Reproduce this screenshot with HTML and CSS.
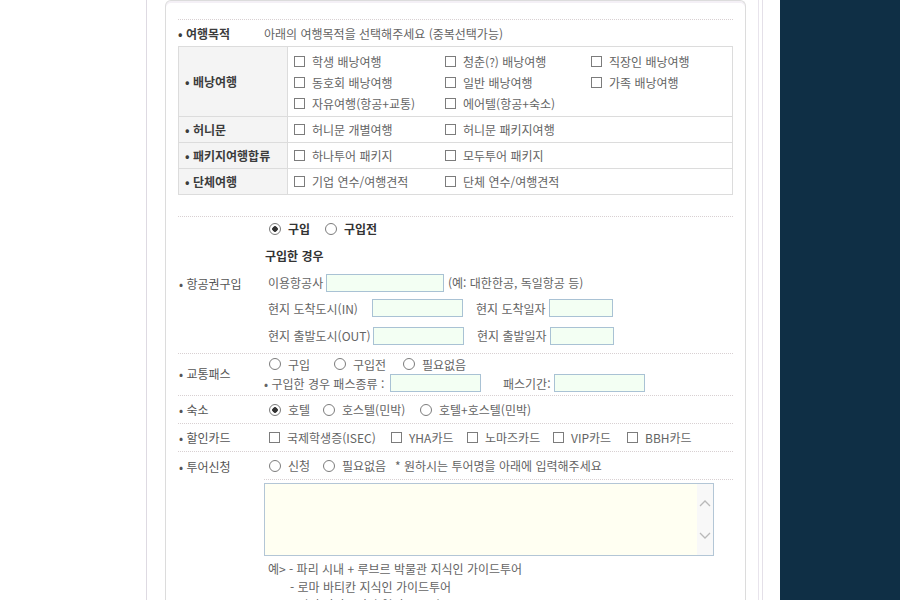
FILE: index.html
```html
<!DOCTYPE html>
<html lang="ko">
<head>
    <meta charset="UTF-8">
    <title>여행상담 신청</title>
    <link rel="stylesheet" href="styles.css">
</head>
<body>
<div class="page">
    <div class="gap-left"></div>

    <div class="main">
        <div class="panel">

            <div class="purpose-head">
                <div class="head-label">• 여행목적</div>
                <div>아래의 여행목적을 선택해주세요 (중복선택가능)</div>
            </div>

            <table class="purpose">
                <tr class="tall">
                    <th>• 배낭여행</th>
                    <td>
                        <div class="chk-grid">
                            <label><input type="checkbox">학생 배낭여행</label>
                            <label><input type="checkbox">청춘(?) 배낭여행</label>
                            <label><input type="checkbox">직장인 배낭여행</label>
                            <label><input type="checkbox">동호회 배낭여행</label>
                            <label><input type="checkbox">일반 배낭여행</label>
                            <label><input type="checkbox">가족 배낭여행</label>
                            <label><input type="checkbox">자유여행(항공+교통)</label>
                            <label><input type="checkbox">에어텔(항공+숙소)</label>
                        </div>
                    </td>
                </tr>
                <tr>
                    <th>• 허니문</th>
                    <td>
                        <div class="chk-grid">
                            <label><input type="checkbox">허니문 개별여행</label>
                            <label><input type="checkbox">허니문 패키지여행</label>
                        </div>
                    </td>
                </tr>
                <tr>
                    <th>• 패키지여행합류</th>
                    <td>
                        <div class="chk-grid">
                            <label><input type="checkbox">하나투어 패키지</label>
                            <label><input type="checkbox">모두투어 패키지</label>
                        </div>
                    </td>
                </tr>
                <tr>
                    <th>• 단체여행</th>
                    <td>
                        <div class="chk-grid">
                            <label><input type="checkbox">기업 연수/여행견적</label>
                            <label><input type="checkbox">단체 연수/여행견적</label>
                        </div>
                    </td>
                </tr>
            </table>

            <div class="form-row air">
                <div class="row-label">• 항공권구입</div>
                <div class="row-body">
                    <div class="line l1 opts buy">
                        <label class="strong"><input type="radio" name="air" checked>구입</label>
                        <label class="strong"><input type="radio" name="air">구입전</label>
                    </div>
                    <div class="line l2 strong case">구입한 경우</div>
                    <div class="line l3">
                        <span class="fld w58">이용항공사</span><input type="text" class="txt w118"><span class="hint">(예: 대한한공, 독일항공 등)</span>
                    </div>
                    <div class="line l4">
                        <span class="fld w104">현지 도착도시(IN)</span><input type="text" class="txt w91">
                        <span class="fld w73 sp">현지 도착일자</span><input type="text" class="txt w64">
                    </div>
                    <div class="line l5">
                        <span class="fld w105">현지 출발도시(OUT)</span><input type="text" class="txt w91">
                        <span class="fld w73 sp">현지 출발일자</span><input type="text" class="txt w64">
                    </div>
                </div>
            </div>

            <div class="form-row pass">
                <div class="row-label">• 교통패스</div>
                <div class="row-body">
                    <div class="line p1 opts pass-opts">
                        <label><input type="radio" name="pass">구입</label>
                        <label><input type="radio" name="pass">구입전</label>
                        <label><input type="radio" name="pass">필요없음</label>
                    </div>
                    <div class="line p2">
                        <span class="fld w126">• 구입한 경우 패스종류 :</span><input type="text" class="txt w91">
                        <span class="fld w51 sp22">패스기간:</span><input type="text" class="txt w91">
                    </div>
                </div>
            </div>

            <div class="form-row single">
                <div class="row-label">• 숙소</div>
                <div class="row-body opts stay">
                    <label><input type="radio" name="stay" checked>호텔</label>
                    <label><input type="radio" name="stay">호스텔(민박)</label>
                    <label><input type="radio" name="stay">호텔+호스텔(민박)</label>
                </div>
            </div>

            <div class="form-row single">
                <div class="row-label">• 할인카드</div>
                <div class="row-body opts cards">
                    <label><input type="checkbox">국제학생증(ISEC)</label>
                    <label><input type="checkbox">YHA카드</label>
                    <label><input type="checkbox">노마즈카드</label>
                    <label><input type="checkbox">VIP카드</label>
                    <label><input type="checkbox">BBH카드</label>
                </div>
            </div>

            <div class="form-row tour">
                <div class="row-label top">• 투어신청</div>
                <div class="row-body">
                    <div class="line t1 opts tour-opts">
                        <label><input type="radio" name="tour">신청</label>
                        <label><input type="radio" name="tour">필요없음</label>
                        <span>* 원하시는 투어명을 아래에 입력해주세요</span>
                    </div>
                    <div class="tour-box">
                        <textarea></textarea>
                        <div class="scrollbar">
                            <svg width="12" height="8" viewBox="0 0 12 8"><path d="M1 7 L6 2 L11 7" fill="none" stroke="#b9b9b9" stroke-width="1.3"/></svg>
                            <svg width="12" height="8" viewBox="0 0 12 8"><path d="M1 1 L6 6 L11 1" fill="none" stroke="#b9b9b9" stroke-width="1.3"/></svg>
                        </div>
                    </div>
                    <div class="examples">
                        <div>예&gt; - 파리 시내 + 루브르 박물관 지식인 가이드투어</div>
                        <div class="indent">- 로마 바티칸 지식인 가이드투어</div>
                        <div class="indent">- 터키 카파도키아 열기구 투어</div>
                    </div>
                </div>
            </div>

        </div>
    </div>

    <div class="gap-right"></div>
    <div class="side"></div>
</div>
</body>
</html>
```

FILE: styles.css
```css
body {
    margin: 0;
    background: #ffffff;
    font-family: "Noto Sans CJK KR", "Noto Sans", sans-serif;
    font-size: 12px;
    color: #646464;
}

.page {
    display: flex;
    width: 900px;
    height: 600px;
    overflow: hidden;
}

.gap-left {
    width: 146px;
    flex: none;
}

.main {
    width: 597px;
    flex: none;
    padding-left: 18px;
    border-left: 1px solid #dedae2;
    border-right: 1px solid #e4e0e8;
    box-shadow: inset -3px 0 0 #ffffff, inset -4px 0 0 #e8e4ec;
}

.gap-right {
    width: 17px;
    flex: none;
}

.side {
    flex: 1;
    background: #0f2f45;
}

.panel {
    width: 555px;
    height: 640px;
    padding: 18px 12px 0 12px;
    border: 1px solid #dcdcdc;
    border-bottom: none;
    border-radius: 6px 6px 0 0;
    box-shadow: inset 0 2px 0 #f4f0f6;
}

.purpose-head {
    display: flex;
    align-items: center;
    height: 26px;
    border-top: 1px dotted #d8d0d2;
}

.head-label {
    width: 86px;
    font-weight: bold;
    color: #3c3c3c;
}

/* purpose table */
.purpose {
    width: 100%;
    border-collapse: collapse;
}

.purpose th,
.purpose td {
    border: 1px solid #dcdcdc;
    height: 25px;
    padding: 0;
}

.purpose tr.tall td,
.purpose tr.tall th {
    height: 69px;
}

.purpose th {
    width: 102px;
    padding-left: 6px;
    text-align: left;
    background: #f4f4f4;
    font-weight: bold;
    color: #3c3c3c;
}

.chk-grid {
    display: grid;
    grid-template-columns: 151px 146px auto;
    grid-auto-rows: 21px;
    align-items: center;
    padding-left: 6px;
}

.purpose tr.tall .chk-grid {
    padding-top: 1px;
}

label {
    display: inline-flex;
    align-items: center;
    white-space: nowrap;
}

input[type="checkbox"],
input[type="radio"] {
    appearance: none;
    -webkit-appearance: none;
    width: 11px;
    height: 11px;
    margin: 0 7px 0 0;
    border: 1px solid #7c7c7c;
    background: #ffffff;
    box-sizing: border-box;
    flex: none;
}

input[type="radio"] {
    width: 12px;
    height: 12px;
    border-radius: 50%;
}

input[type="radio"]:checked {
    background: radial-gradient(circle, #333333 0, #333333 2.5px, #ffffff 3px);
}

/* lower form rows */
.form-row {
    display: grid;
    grid-template-columns: 86px 1fr;
    align-items: center;
    border-bottom: 1px dotted #d8d0d2;
}

.form-row.air {
    margin-top: 21px;
    border-top: 1px dotted #d8d0d2;
    padding-bottom: 4px;
}

.row-label {
    padding-left: 1px;
    color: #555555;
}

.row-label.top {
    align-self: start;
    height: 28px;
    display: flex;
    align-items: center;
}

.line {
    display: flex;
    align-items: center;
    white-space: nowrap;
}

.l1 { height: 23px; }
.l2 { height: 31px; padding-left: 1px; }
.l3 { height: 23px; padding-left: 4px; }
.l4 { height: 28px; padding-left: 4px; }
.l5 { height: 27px; padding-left: 4px; }

.strong {
    font-weight: bold;
    color: #333333;
}

.opts {
    padding-left: 5px;
}

.buy label:first-child { width: 56px; }

.fld {
    display: inline-block;
    flex: none;
}

.sp { margin-left: 13px; }
.sp22 { margin-left: 22px; }

.w51 { width: 51px; }
.w58 { width: 58px; }
.w73 { width: 73px; }
.w104 { width: 104px; }
.w105 { width: 105px; }
.w126 { width: 126px; }

.txt {
    height: 18px;
    margin: 0;
    padding: 0 3px;
    border: 1px solid #a9c2d4;
    background: #f3fff3;
    box-sizing: border-box;
    flex: none;
}

.txt.w64 { width: 64px; }
.txt.w91 { width: 91px; }
.txt.w118 { width: 118px; }

.hint {
    margin-left: 4px;
}

.pass {
    padding: 0 0 3px 0;
}

.p1 { height: 20px; }
.p2 { height: 18px; }

.pass-opts label:nth-child(1) { width: 65px; }
.pass-opts label:nth-child(2) { width: 69px; }

.single .row-body {
    height: 27px;
    display: flex;
    align-items: center;
}

.stay label:nth-child(1) { width: 54px; }
.stay label:nth-child(2) { width: 97px; }

.cards label:nth-child(1) { width: 122px; }
.cards label:nth-child(2) { width: 76px; }
.cards label:nth-child(3) { width: 86px; }
.cards label:nth-child(4) { width: 74px; }

.tour {
    border-bottom: none;
    align-items: start;
}

.t1 {
    height: 27px;
    border-bottom: 1px dotted #d8d0d2;
}

.tour-opts label:nth-child(1) { width: 54px; }
.tour-opts label:nth-child(2) { width: 72px; }

.tour-box {
    display: flex;
    width: 450px;
    height: 73px;
    margin-top: 3px;
    border: 1px solid #b3c6d6;
    box-sizing: border-box;
    background: #fffff2;
}

.tour-box textarea {
    flex: 1;
    border: none;
    margin: 0;
    padding: 2px;
    background: transparent;
    resize: none;
    outline: none;
}

.scrollbar {
    width: 16px;
    display: flex;
    flex-direction: column;
    justify-content: space-between;
    align-items: center;
    padding: 15px 0 15px 0;
    background: #f8f8f8;
}

.examples {
    padding: 4px 0 0 4px;
    line-height: 18px;
}

.examples .indent {
    padding-left: 22px;
}
```
